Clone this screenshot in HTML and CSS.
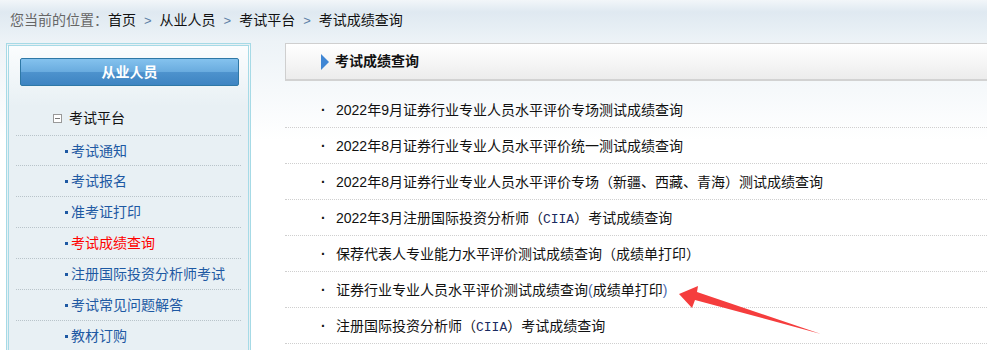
FILE: index.html
```html
<!DOCTYPE html>
<html lang="zh-CN">
<head>
<meta charset="UTF-8">
<title>考试成绩查询</title>
<link rel="stylesheet" href="styles.css">
</head>
<body>
  <div class="crumb">
    <span class="here">您当前的位置：</span><a href="#">首页</a><span class="sep">&gt;</span><a href="#">从业人员</a><span class="sep">&gt;</span><a href="#">考试平台</a><span class="sep">&gt;</span><span>考试成绩查询</span>
  </div>

  <div class="wrap">
    <div class="side">
      <div class="side-btn">从业人员</div>
      <div class="group">
        <div class="group-title"><span class="fold"></span>考试平台</div>
        <ul class="sub">
          <li><a href="#">考试通知</a></li>
          <li><a href="#">考试报名</a></li>
          <li><a href="#">准考证打印</a></li>
          <li class="active"><a href="#">考试成绩查询</a></li>
          <li><a href="#">注册国际投资分析师考试</a></li>
          <li><a href="#">考试常见问题解答</a></li>
          <li><a href="#">教材订购</a></li>
        </ul>
      </div>
    </div>

    <div class="main">
      <div class="main-head"><span class="tri"></span>考试成绩查询</div>
      <ul class="list">
        <li><a href="#">2022年9月证券行业专业人员水平评价专场测试成绩查询</a></li>
        <li><a href="#">2022年8月证券行业专业人员水平评价统一测试成绩查询</a></li>
        <li><a href="#">2022年8月证券行业专业人员水平评价专场（新疆、西藏、青海）测试成绩查询</a></li>
        <li><a href="#">2022年3月注册国际投资分析师（<span class="mono">CIIA</span>）考试成绩查询</a></li>
        <li><a href="#">保荐代表人专业能力水平评价测试成绩查询（成绩单打印）</a></li>
        <li><a href="#">证券行业专业人员水平评价测试成绩查询<span class="paren">(</span>成绩单打印<span class="paren">)</span></a></li>
        <li><a href="#">注册国际投资分析师（<span class="mono">CIIA</span>）考试成绩查询</a></li>
      </ul>
    </div>
  </div>

  <!-- 标注箭头 -->
  <svg class="mark" width="987" height="350" viewBox="0 0 987 350">
    <polygon points="679,294 698,286 697,292 821,334 695,300 692,308" fill="#f53d3d"/>
  </svg>
</body>
</html>
```

FILE: styles.css
```css
body {
  margin: 0;
  font-family: "Liberation Sans", "Noto Sans CJK SC", sans-serif;
  font-size: 14px;
  color: #222;
  background: #fff linear-gradient(#f2f6f9 0, #dfe9f1 12px, #edf3f7 42px, #fff 140px) no-repeat;
  overflow: hidden;
}
a {
  color: inherit;
  text-decoration: none;
}
ul {
  list-style: none;
  margin: 0;
  padding: 0;
}
.crumb {
  height: 42px;
  line-height: 41px;
  padding-left: 10px;
  color: #111;
}
.crumb .here {
  color: #666;
}
.crumb .sep {
  color: #5c7fa6;
  margin: 0 8px;
  font-size: 13px;
}
.wrap {
  display: flex;
  align-items: flex-start;
  padding-top: 1px;
}
.side {
  margin-left: 6px;
  width: 239px;
  height: 320px;
  border: 3px double #a6dae6;
  background: linear-gradient(#fbfdfe 0, #e8f0f4 60px);
}
.side-btn {
  margin: 12px 9px 0 11px;
  height: 26px;
  line-height: 26px;
  text-align: center;
  color: #fff;
  font-weight: bold;
  border: 1px solid #2e78a6;
  border-radius: 2px;
  background: linear-gradient(#84c2ee 0, #6aacdf 48%, #4d92cd 52%, #3e84c2 100%);
}
.group {
  margin: 16px 7px 0 7px;
}
.group-title {
  height: 33px;
  line-height: 33px;
  padding-left: 37px;
  border-bottom: 1px dotted #b9c4ca;
  color: #111;
  display: flex;
  align-items: center;
}
.fold {
  width: 7px;
  height: 7px;
  border: 1px solid #999;
  margin-right: 7px;
  position: relative;
  background: #fff;
}
.fold::after {
  content: "";
  position: absolute;
  left: 1px;
  top: 3px;
  width: 5px;
  height: 1px;
  background: #777;
}
.sub li {
  height: 30px;
  line-height: 30px;
  padding-left: 49px;
  border-bottom: 1px dotted #b9c4ca;
  color: #1d59a3;
  display: flex;
  align-items: center;
}
.sub li:first-child {
  height: 28px;
  line-height: 28px;
  padding-top: 1px;
}
.sub li::before {
  content: "";
  width: 3px;
  height: 3px;
  background: #1d59a3;
  margin-right: 3px;
}
.sub li.active {
  color: #f00;
}
.main {
  flex: 1;
  margin-left: 34px;
  margin-right: -10px;
}
.main-head {
  height: 35px;
  line-height: 35px;
  border: 1px solid #cfcfcf;
  border-bottom: 2px solid #d2d2d2;
  background: linear-gradient(#ffffff 0, #f6f6f6 50%, #ececec 100%);
  padding-left: 35px;
  font-weight: bold;
  color: #111;
  display: flex;
  align-items: center;
}
.tri {
  width: 0;
  height: 0;
  border-top: 8px solid transparent;
  border-bottom: 8px solid transparent;
  border-left: 8px solid #3f86d4;
  margin-right: 6px;
}
.list {
  padding-top: 11px;
}
.list li {
  height: 35px;
  line-height: 36px;
  border-bottom: 1px dotted #cfcfcf;
  padding-left: 36px;
  color: #111;
}
.list li::before {
  content: "·";
  display: inline-block;
  width: 15px;
  font-weight: bold;
}
.mono {
  font-family: "Liberation Mono", monospace;
  font-size: 13px;
  color: #1a2a60;
}
.paren {
  color: #4a6ab0;
}
.mark {
  position: absolute;
  left: 0;
  top: 0;
  pointer-events: none;
}
```
